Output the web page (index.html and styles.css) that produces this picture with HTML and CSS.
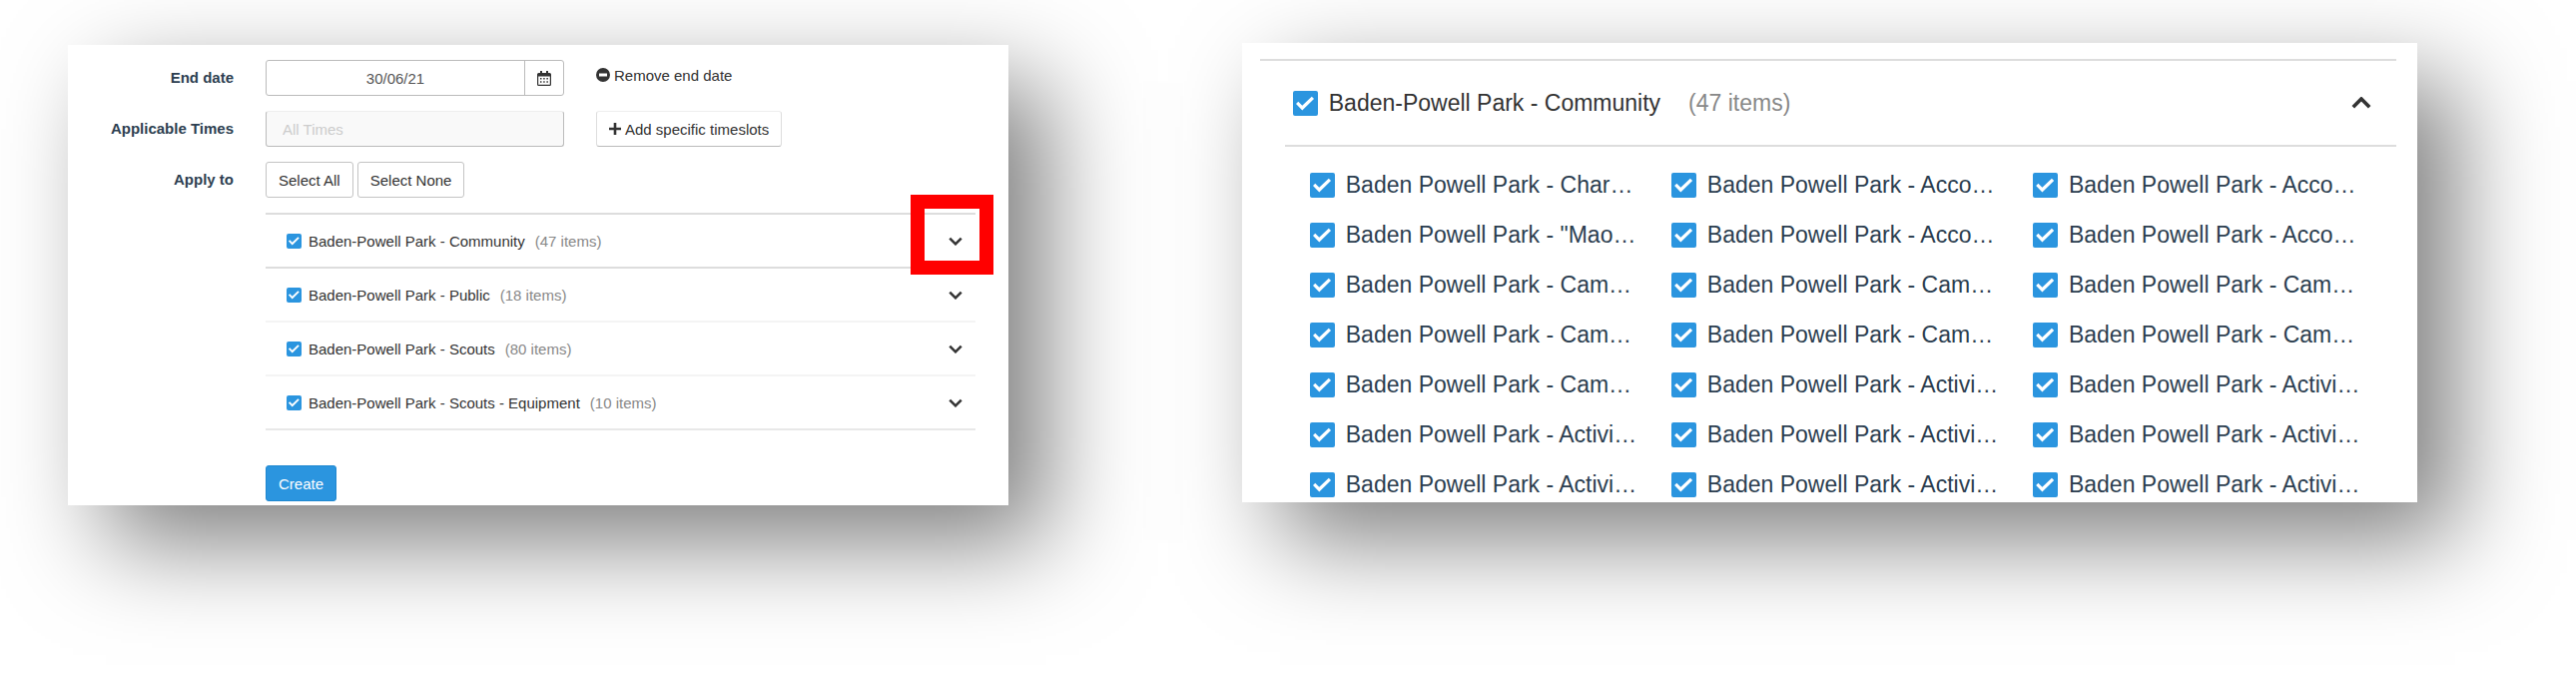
FILE: index.html
```html
<!DOCTYPE html>
<html lang="en">
<head>
  <meta charset="UTF-8" />
  <meta name="viewport" content="width=device-width, initial-scale=1.0"/>
  <title>Apply rule to items</title>
  <link rel="stylesheet" href="styles.css">
</head>
<body>

  <!-- Icons -->
  <svg class="sprite" aria-hidden="true">
    <symbol id="chevron" viewBox="0 0 20 12">
      <path d="M1.8 1.8 L10 10 L18.2 1.8" fill="none" stroke="currentColor" stroke-width="3.6"/>
    </symbol>
    <symbol id="calendar" viewBox="0 0 14 15">
      <path fill="currentColor" fill-rule="evenodd" d="M3 0h2v2h4V0h2v2h1.500A1.500 1.500 0 0 1 14 3.500V13.500A1.500 1.500 0 0 1 12.500 15h-11A1.500 1.500 0 0 1 0 13.500V3.500A1.500 1.500 0 0 1 1.500 2H3zM1.200 5.500v8.300h11.600v-8.300z"/>
      <path fill="currentColor" d="M3 7h1.500v1.500H3zM6.200 7h1.500v1.500H6.200zM9.400 7h1.500v1.500H9.400zM3 10.200h1.500v1.500H3zM6.200 10.200h1.500v1.500H6.200zM9.400 10.200h1.500v1.500H9.400z"/>
    </symbol>
    <symbol id="minus" viewBox="0 0 14 14">
      <path fill="currentColor" fill-rule="evenodd" d="M7 0a7 7 0 1 1 0 14A7 7 0 0 1 7 0zM3 5.500v3h8v-3z"/>
    </symbol>
    <symbol id="plus" viewBox="0 0 12 12">
      <path fill="currentColor" d="M4.700 0h2.600v4.700H12v2.600H7.300V12H4.700V7.300H0V4.700h4.700z"/>
    </symbol>
  </svg>

  <main class="panels">

    <!-- Rule form -->
    <form class="panel rule-form">
      <label class="field-label" for="end-date">End date</label>
      <div class="date-group">
        <input id="end-date" class="date-input" type="text" value="30/06/21">
        <button class="date-btn" type="button" aria-label="Pick a date"><svg width="14" height="15"><use href="#calendar"/></svg></button>
      </div>
      <button class="link-btn" type="button"><svg width="14" height="14"><use href="#minus"/></svg>Remove end date</button>

      <label class="field-label" for="times">Applicable Times</label>
      <input id="times" class="times-input" type="text" placeholder="All Times" disabled>
      <button class="btn add-btn" type="button"><svg width="12" height="12"><use href="#plus"/></svg>Add specific timeslots</button>

      <span class="field-label">Apply to</span>
      <div class="btn-row">
        <button class="btn" type="button">Select All</button>
        <button class="btn" type="button">Select None</button>
      </div>

      <ul class="groups">
        <li class="group">
          <label class="check"><input type="checkbox" checked>Baden-Powell Park - Community</label>
          <span class="count">(47 items)</span>
          <button class="toggle" type="button" aria-label="Expand"><svg width="14" height="9"><use href="#chevron"/></svg></button>
          <span class="highlight"></span>
        </li>
        <li class="group">
          <label class="check"><input type="checkbox" checked>Baden-Powell Park - Public</label>
          <span class="count">(18 items)</span>
          <button class="toggle" type="button" aria-label="Expand"><svg width="14" height="9"><use href="#chevron"/></svg></button>
        </li>
        <li class="group">
          <label class="check"><input type="checkbox" checked>Baden-Powell Park - Scouts</label>
          <span class="count">(80 items)</span>
          <button class="toggle" type="button" aria-label="Expand"><svg width="14" height="9"><use href="#chevron"/></svg></button>
        </li>
        <li class="group">
          <label class="check"><input type="checkbox" checked>Baden-Powell Park - Scouts - Equipment</label>
          <span class="count">(10 items)</span>
          <button class="toggle" type="button" aria-label="Expand"><svg width="14" height="9"><use href="#chevron"/></svg></button>
        </li>
      </ul>

      <button class="create-btn" type="submit">Create</button>
    </form>

    <!-- Expanded group -->
    <section class="panel expanded">
      <div class="expanded-top">
        <div class="expanded-head">
          <label class="check"><input type="checkbox" checked>Baden-Powell Park - Community</label>
          <span class="count">(47 items)</span>
          <button class="toggle open" type="button" aria-label="Collapse"><svg width="20" height="12"><use href="#chevron"/></svg></button>
        </div>
      </div>
      <div class="items">
        <label class="check"><input type="checkbox" checked>Baden Powell Park - Char…</label>
        <label class="check"><input type="checkbox" checked>Baden Powell Park - Acco…</label>
        <label class="check"><input type="checkbox" checked>Baden Powell Park - Acco…</label>

        <label class="check"><input type="checkbox" checked>Baden Powell Park - "Mao…</label>
        <label class="check"><input type="checkbox" checked>Baden Powell Park - Acco…</label>
        <label class="check"><input type="checkbox" checked>Baden Powell Park - Acco…</label>

        <label class="check"><input type="checkbox" checked>Baden Powell Park - Cam…</label>
        <label class="check"><input type="checkbox" checked>Baden Powell Park - Cam…</label>
        <label class="check"><input type="checkbox" checked>Baden Powell Park - Cam…</label>

        <label class="check"><input type="checkbox" checked>Baden Powell Park - Cam…</label>
        <label class="check"><input type="checkbox" checked>Baden Powell Park - Cam…</label>
        <label class="check"><input type="checkbox" checked>Baden Powell Park - Cam…</label>

        <label class="check"><input type="checkbox" checked>Baden Powell Park - Cam…</label>
        <label class="check"><input type="checkbox" checked>Baden Powell Park - Activi…</label>
        <label class="check"><input type="checkbox" checked>Baden Powell Park - Activi…</label>

        <label class="check"><input type="checkbox" checked>Baden Powell Park - Activi…</label>
        <label class="check"><input type="checkbox" checked>Baden Powell Park - Activi…</label>
        <label class="check"><input type="checkbox" checked>Baden Powell Park - Activi…</label>

        <label class="check"><input type="checkbox" checked>Baden Powell Park - Activi…</label>
        <label class="check"><input type="checkbox" checked>Baden Powell Park - Activi…</label>
        <label class="check"><input type="checkbox" checked>Baden Powell Park - Activi…</label>
      </div>
    </section>

  </main>

</body>
</html>
```
FILE: styles.css
```css
* { margin: 0; padding: 0; box-sizing: border-box; }

body {
  background: #fff;
  color: #333;
  font-family: "Liberation Sans", Arial, sans-serif;
  font-size: 15px;
}

button, input { font: inherit; color: inherit; }
button { cursor: pointer; }

.sprite { display: none; }

.panels {
  display: grid;
  grid-template-columns: 4fr 5fr;
  column-gap: 234px;
  align-items: start;
  padding: 0 159px 160px 68px;
}

.panel {
  background: #fff;
  box-shadow: 38px 38px 92px rgba(0, 0, 0, 0.5);
}

/* Rule form */
.rule-form {
  display: grid;
  grid-template-columns: 166px 299px 1fr;
  gap: 15px 32px;
  margin-top: 45px;
  padding: 15px 33px 4px 0;
}

.field-label {
  color: #2c3e50;
  font-weight: bold;
  line-height: 36px;
  text-align: right;
}

.date-group {
  display: flex;
  height: 36px;
  border: 1px solid #bbb;
  border-radius: 3px;
}

.date-input {
  flex: 1;
  min-width: 0;
  border: 0;
  background: none;
  color: #555;
  text-align: center;
}

.date-btn {
  display: flex;
  align-items: center;
  justify-content: center;
  width: 39px;
  border: 0;
  border-left: 1px solid #bbb;
  background: none;
}

.link-btn {
  display: flex;
  align-items: center;
  justify-self: start;
  gap: 4px;
  height: 30px;
  border: 0;
  background: none;
}

.times-input {
  height: 36px;
  padding: 0 16px;
  border: 1px solid #bbb;
  border-top-color: #eee;
  border-radius: 3px;
  background: #f9f9f9;
}

.times-input::placeholder { color: #ccc; }

.btn {
  display: flex;
  align-items: center;
  gap: 4px;
  height: 36px;
  padding: 0 12px;
  border: 1px solid #c4c4c4;
  border-radius: 3px;
  background: #fff;
}

.add-btn {
  justify-self: start;
  border-color: #eee #ddd #bbb;
}

.btn-row {
  display: flex;
  grid-column: 2 / -1;
  gap: 4px;
}

.groups {
  grid-column: 2 / -1;
  border-top: 2px solid #ddd;
  list-style: none;
}

.group {
  position: relative;
  display: flex;
  align-items: center;
  height: 54px;
  padding: 0 13px 0 21px;
  border-bottom: 2px solid #f4f4f4;
}

.group:first-child { border-bottom-color: #ddd; }
.group:last-child { border-bottom-color: #e8e8e8; }

.group .count { margin-left: 10px; }

/* Red frame over the first arrow */
.highlight {
  position: absolute;
  top: -20px;
  right: -18px;
  width: 83px;
  height: 80px;
  border: 14px solid #f00;
  pointer-events: none;
}

.create-btn {
  grid-column: 2;
  justify-self: start;
  height: 36px;
  margin-top: 20px;
  padding: 0 12px;
  border: 1px solid #2088d0;
  border-radius: 3px;
  background: #2b95df;
  color: #fff;
}

/* Checkboxes, arrows */
.check {
  display: flex;
  align-items: center;
  gap: 7px;
  white-space: nowrap;
}

.check input {
  appearance: none;
  flex: none;
  width: 15px;
  height: 15px;
  border-radius: 2px;
  background: #2b95df;
}

.check input::before {
  content: '';
  display: block;
  width: 100%;
  height: 100%;
  background: #fff;
  clip-path: polygon(13% 54%, 22% 45%, 38% 61%, 76% 25%, 85% 34%, 38% 80%);
}

.check input:not(:checked)::before { display: none; }

.count { color: #888; }

.toggle {
  display: flex;
  margin-left: auto;
  border: 0;
  background: none;
}

.toggle.open { transform: rotate(180deg); }

/* Expanded group */
.expanded {
  margin-top: 43px;
  padding: 16px 21px 0 18px;
  font-size: 23px;
}

.expanded-top {
  padding-left: 25px;
  border-top: 2px solid #ddd;
}

.expanded-head {
  display: flex;
  align-items: center;
  height: 86px;
  padding: 0 25px 0 8px;
  border-bottom: 2px solid #ddd;
}

.expanded .check { gap: 11px; }

.expanded .check input {
  width: 25px;
  height: 25px;
}

.expanded .count { margin-left: 28px; }

.items {
  display: grid;
  grid-template-columns: repeat(3, 1fr);
  row-gap: 14px;
  padding: 20px 2px 0 50px;
  color: #2c3e50;
}

.items .check { height: 36px; }
```
